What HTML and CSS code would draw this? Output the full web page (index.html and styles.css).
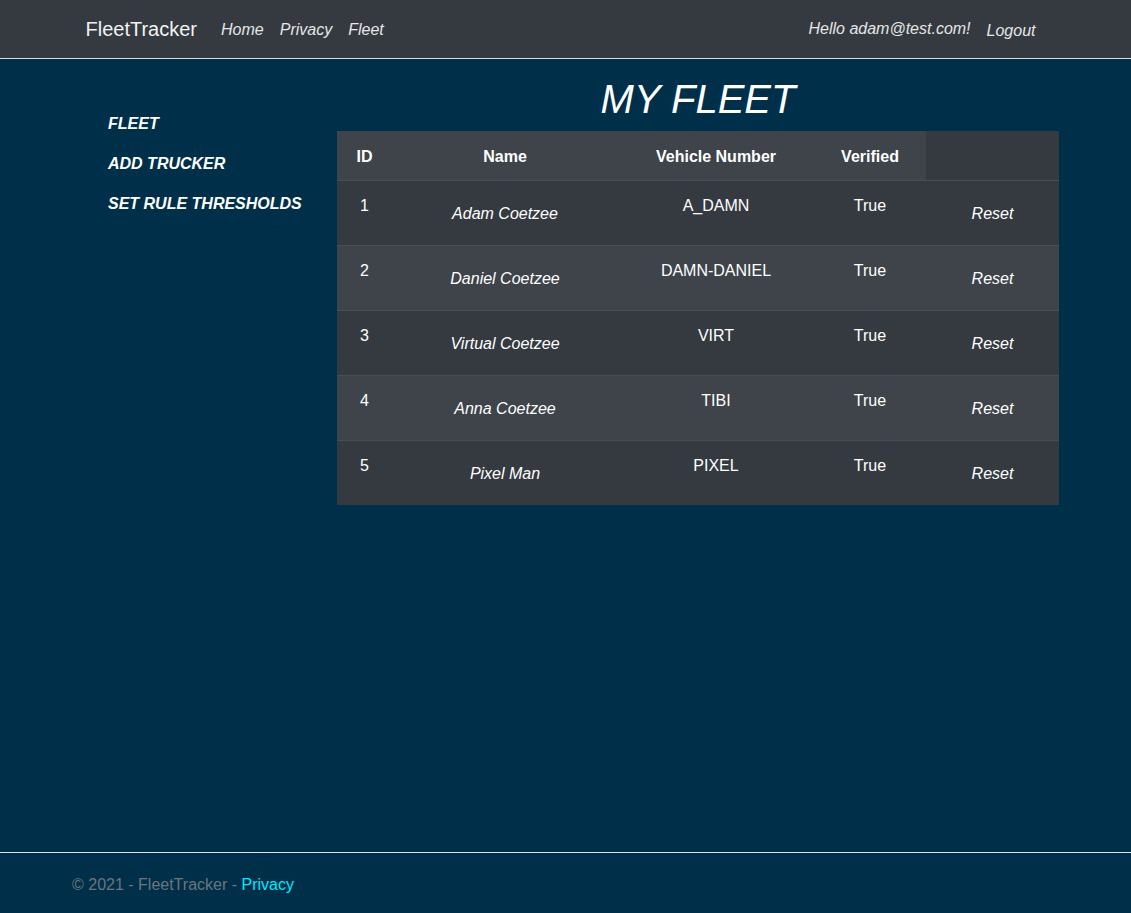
FILE: index.html
```html
<!DOCTYPE html>
<html lang="en">
<head>
<meta charset="utf-8">
<title>My Fleet - FleetTracker</title>
<link rel="stylesheet" href="styles.css">
</head>
<body>
<header class="navbar">
  <div class="nav-container">
    <a class="brand" href="#">FleetTracker</a>
    <nav class="nav-links">
      <a class="nav-link" href="#">Home</a>
      <a class="nav-link" href="#">Privacy</a>
      <a class="nav-link" href="#">Fleet</a>
    </nav>
    <div class="nav-right">
      <span class="nav-link greeting">Hello adam@test.com!</span>
      <a class="nav-link logout" href="#">Logout</a>
    </div>
  </div>
</header>

<main class="page">
  <aside class="sidebar">
    <a class="side-link" href="#">FLEET</a>
    <a class="side-link" href="#">ADD TRUCKER</a>
    <a class="side-link" href="#">SET RULE THRESHOLDS</a>
  </aside>
  <section class="content">
    <h1 class="title">MY FLEET</h1>
    <table class="fleet">
      <colgroup>
        <col class="c-id"><col class="c-name"><col class="c-veh"><col class="c-ver"><col class="c-act">
      </colgroup>
      <thead>
        <tr><th class="hcell">ID</th><th class="hcell">Name</th><th class="hcell">Vehicle Number</th><th class="hcell">Verified</th><th class="hempty"></th></tr>
      </thead>
      <tbody>
        <tr><td>1</td><td><span class="pad name">Adam Coetzee</span></td><td>A_DAMN</td><td>True</td><td><a class="pad reset" href="#">Reset</a></td></tr>
        <tr><td>2</td><td><span class="pad name">Daniel Coetzee</span></td><td>DAMN-DANIEL</td><td>True</td><td><a class="pad reset" href="#">Reset</a></td></tr>
        <tr><td>3</td><td><span class="pad name">Virtual Coetzee</span></td><td>VIRT</td><td>True</td><td><a class="pad reset" href="#">Reset</a></td></tr>
        <tr><td>4</td><td><span class="pad name">Anna Coetzee</span></td><td>TIBI</td><td>True</td><td><a class="pad reset" href="#">Reset</a></td></tr>
        <tr><td>5</td><td><span class="pad name">Pixel Man</span></td><td>PIXEL</td><td>True</td><td><a class="pad reset" href="#">Reset</a></td></tr>
      </tbody>
    </table>
  </section>
</main>

<footer class="footer">
  <span>&copy; 2021 - FleetTracker - </span><a class="footer-link" href="#">Privacy</a>
</footer>
</body>
</html>
```

FILE: styles.css
```css
* { box-sizing: border-box; }

html, body { height: 100%; }

body {
  margin: 0;
  min-height: 100vh;
  display: flex;
  flex-direction: column;
  background: #003049;
  color: #fff;
  font-family: "Liberation Sans", Arial, sans-serif;
  font-size: 16px;
  line-height: 24px;
}

a { text-decoration: none; color: inherit; }

.navbar {
  background: #343a40;
  border-bottom: 1px solid #dcdcdc;
}

.nav-container {
  width: 960px;
  margin: 0 auto;
  height: 58px;
  display: flex;
  align-items: center;
}

.brand {
  font-size: 20px;
  line-height: 30px;
  color: #f2f2f2;
  margin-right: 16px;
  padding-bottom: 1px;
}

.nav-links, .nav-right {
  display: flex;
  align-items: center;
}

.nav-right {
  margin-left: auto;
  margin-right: 2px;
}

.nav-link {
  padding: 9px 8px 7px;
  font-style: italic;
  color: #e6e6e6;
}

.greeting { margin-top: -2px; }

.logout { padding: 10px 8px 6px; }

.page {
  flex: 1;
  display: flex;
  padding-left: 108px;
}

.sidebar {
  width: 229px;
  padding-top: 45px;
  display: flex;
  flex-direction: column;
}

.side-link {
  padding: 8px 0;
  font-weight: bold;
  font-style: italic;
  color: #fff;
}

.content {
  width: 722px;
  padding-top: 16px;
}

.title {
  margin: 0 0 8px;
  text-align: center;
  font-size: 40px;
  line-height: 48px;
  font-weight: normal;
  font-style: italic;
}

.fleet {
  width: 722px;
  border-collapse: collapse;
  table-layout: fixed;
  background: #343a40;
}

.c-id { width: 55px; }
.c-name { width: 226px; }
.c-veh { width: 196px; }
.c-ver { width: 112px; }
.c-act { width: 133px; }

.fleet th, .fleet td {
  text-align: center;
  vertical-align: top;
}

.fleet th {
  font-weight: bold;
  padding: 14px 12px 11px;
}

.fleet td {
  padding: 13px 12px 11px;
  border-top: 1px solid #474e56;
}

.hcell { background: #3e444a; }

.fleet tbody tr:nth-child(even) { background: #3e444a; }

.pad {
  display: inline-block;
  padding: 8px 0;
  font-style: italic;
}

.reset { color: #fff; }

.footer {
  border-top: 1px solid #e6e6e6;
  height: 61px;
  padding-top: 4px;
  line-height: 56px;
  padding-left: 72px;
  color: #6c757d;
}

.footer-link { color: #00e8ff; }
```
